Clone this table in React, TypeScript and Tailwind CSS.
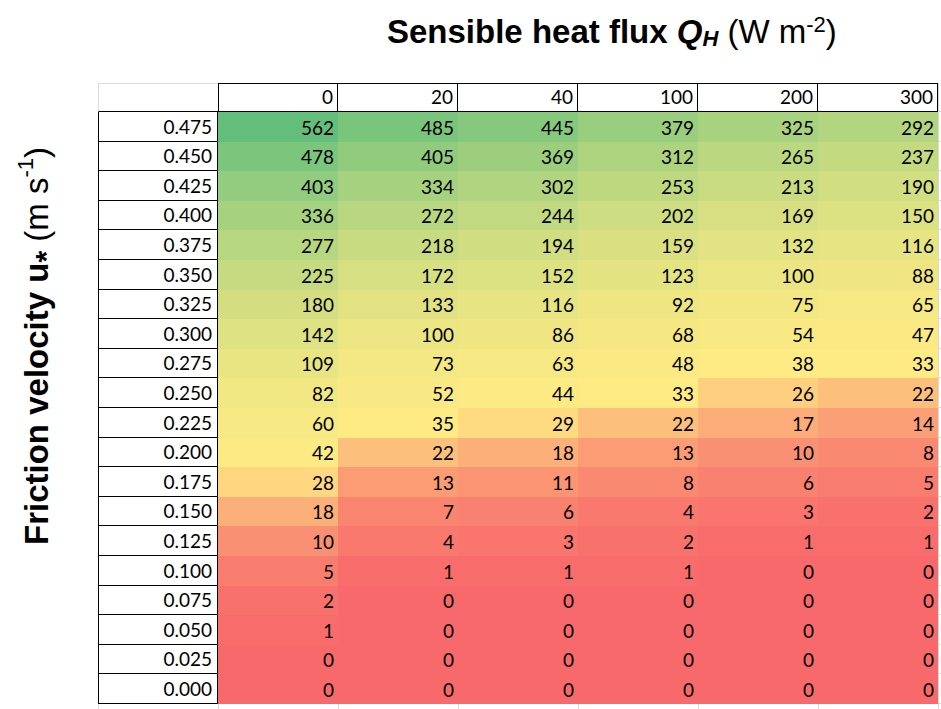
import React from 'react';

const heads = [0, 20, 40, 100, 200, 300];

const rows: { u: string; v: number[] }[] = [
  { u: '0.475', v: [562, 485, 445, 379, 325, 292] },
  { u: '0.450', v: [478, 405, 369, 312, 265, 237] },
  { u: '0.425', v: [403, 334, 302, 253, 213, 190] },
  { u: '0.400', v: [336, 272, 244, 202, 169, 150] },
  { u: '0.375', v: [277, 218, 194, 159, 132, 116] },
  { u: '0.350', v: [225, 172, 152, 123, 100, 88] },
  { u: '0.325', v: [180, 133, 116, 92, 75, 65] },
  { u: '0.300', v: [142, 100, 86, 68, 54, 47] },
  { u: '0.275', v: [109, 73, 63, 48, 38, 33] },
  { u: '0.250', v: [82, 52, 44, 33, 26, 22] },
  { u: '0.225', v: [60, 35, 29, 22, 17, 14] },
  { u: '0.200', v: [42, 22, 18, 13, 10, 8] },
  { u: '0.175', v: [28, 13, 11, 8, 6, 5] },
  { u: '0.150', v: [18, 7, 6, 4, 3, 2] },
  { u: '0.125', v: [10, 4, 3, 2, 1, 1] },
  { u: '0.100', v: [5, 1, 1, 1, 0, 0] },
  { u: '0.075', v: [2, 0, 0, 0, 0, 0] },
  { u: '0.050', v: [1, 0, 0, 0, 0, 0] },
  { u: '0.025', v: [0, 0, 0, 0, 0, 0] },
  { u: '0.000', v: [0, 0, 0, 0, 0, 0] },
];

// excel-style 3 colour scale: min red, 50th percentile yellow, max green
const all = rows.flatMap(r => r.v).sort((a, b) => a - b);
const min = all[0];
const max = all[all.length - 1];
const mid = (all[all.length / 2 - 1] + all[all.length / 2]) / 2;

const scale = (v: number) => {
  const red = [248, 105, 107];
  const yellow = [255, 235, 132];
  const green = [99, 190, 123];
  let a = red, b = yellow, t = 0;
  if (v <= mid) {
    t = (v - min) / (mid - min);
  } else {
    a = yellow;
    b = green;
    t = (v - mid) / (max - mid);
  }
  const c = a.map((x, i) => Math.round(x + (b[i] - x) * t));
  return `rgb(${c[0]}, ${c[1]}, ${c[2]})`;
};

const num = "font-['Lato','Open_Sans',sans-serif] text-[19px] leading-none text-black flex items-end justify-end pr-[4px] pb-[5px]";

const App = () => {
  return (
    <div className="w-[941px] h-[709px] overflow-hidden bg-white flex flex-col">
      {/* title */}
      <div className="h-[83px] shrink-0 pl-[387px] pt-[14px] text-[33px] leading-none text-black whitespace-nowrap font-['Liberation_Sans',Arial,sans-serif]">
        <span className="font-bold">Sensible heat flux </span>
        <span className="font-bold italic">
          Q<span className="text-[22px] align-[-3px]">H</span>
        </span>{' '}
        (W m<span className="text-[22px] align-[11px]">-2</span>)
      </div>

      <div className="flex flex-1">
        {/* y axis label */}
        <div className="w-[98px] shrink-0">
          <div className="w-fit ml-[15px] mt-[64px] [writing-mode:vertical-rl] rotate-180 text-[33px] leading-none text-black whitespace-nowrap font-['Liberation_Sans',Arial,sans-serif]">
            <span className="font-bold">
              Friction velocity u<span className="text-[30px] align-[-9px]">*</span>
            </span>{' '}
            (m s<span className="text-[22px] align-[11px]">-1</span>)
          </div>
        </div>

        {/* sheet */}
        <div className="grid w-[843px] grid-cols-[120px_repeat(6,120px)_3px] grid-rows-[29px_repeat(20,29.6px)_5px]">
          <div className="border-t border-l border-b border-t-[#d9d9d9] border-l-[#d9d9d9] border-b-black bg-white" />
          {heads.map((h, i) => (
            <div
              key={h}
              className={`${num} bg-white border-t border-b border-r border-black ${i === 0 ? 'border-l' : ''}`}
            >
              {h}
            </div>
          ))}
          <div className="border-l border-b border-[#d9d9d9]" />

          {rows.map(r => (
            <React.Fragment key={r.u}>
              <div className={`${num} bg-white border-l border-r border-b border-black pr-[5px]`}>{r.u}</div>
              {r.v.map((v, j) => (
                <div key={j} className={num} style={{ backgroundColor: scale(v) }}>
                  {v}
                </div>
              ))}
              <div className="border-l border-b border-[#d9d9d9]" />
            </React.Fragment>
          ))}

          {Array.from({ length: 8 }).map((_, i) => (
            <div key={i} className="border-l border-[#d9d9d9]" />
          ))}
        </div>
      </div>
    </div>
  );
};

export default App;
